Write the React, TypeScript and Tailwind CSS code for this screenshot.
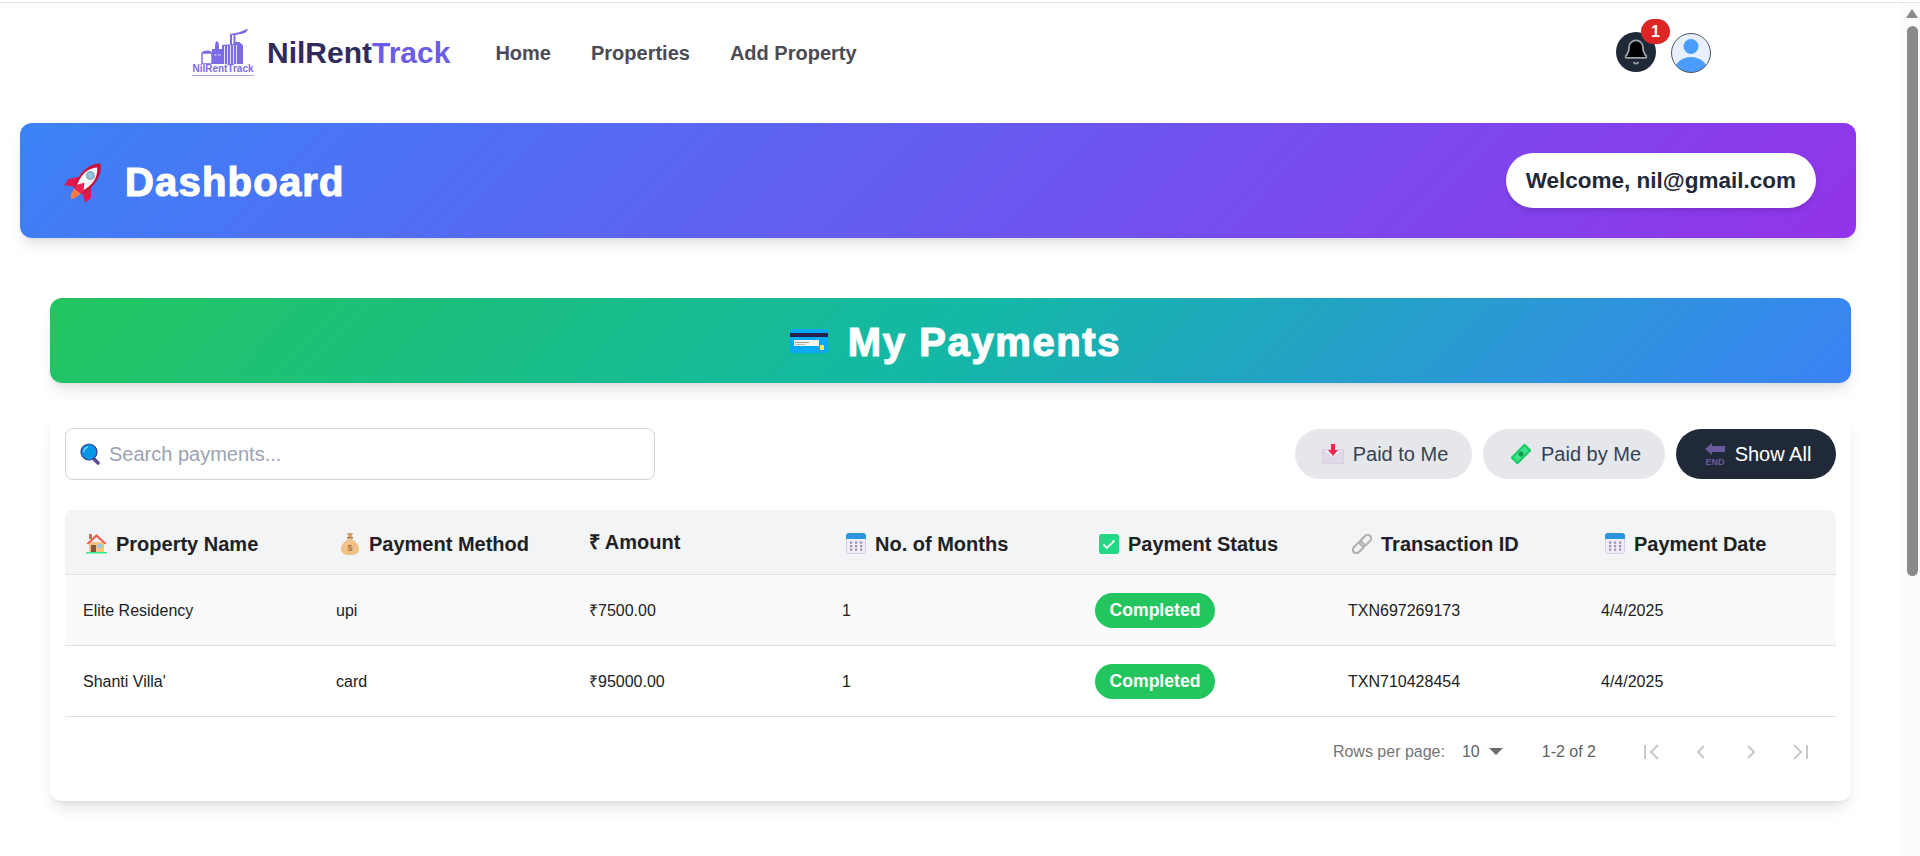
import { Bell } from "lucide-react";
import type { ReactNode } from "react";

function LogoMark() {
  return (
    <svg viewBox="0 0 66 36" className="w-[66px] h-[36px]">
      <g fill="#7b6be6">
        <path d="M40 6c4-1 7-1 10-2 3-1 5-3 8-3-1 3-4 5-8 5-3 1-6 1-10 1z" />
        <rect x="40" y="7" width="2" height="10" />
        <rect x="43.500" y="7" width="2" height="10" />
        <path d="M32 17l12-1 0-2 5 0 4 3v19H32z" />
        <path d="M25 19a2 6 0 0 1 4 0v3h-4z" />
        <rect x="22" y="21" width="10" height="15" />
        <path d="M12 25h10v11H12z" fill="none" stroke="#7b6be6" strokeWidth="1.400" />
        <path d="M12 25a5 2.500 0 0 1 10 0z" />
      </g>
      <g stroke="#ffffff" strokeWidth="0.800">
        <path d="M34.500 18v18M37.500 18v18M40.500 17v19M43.500 17v19M46.500 17v19" />
        <path d="M24 27h2.500M28 27h2.500M13 28h8" />
      </g>
    </svg>
  );
}

function Rocket() {
  return (
    <svg viewBox="0 0 40 40" className="w-[42px] h-[42px]">
      <g transform="rotate(40 20 20)">
        <path d="M16 31h8l-1 5c-1 3-2 4-3 5-1-1-2-2-3-5z" fill="#fb7a45" />
        <path d="M13 19l-7 9 1 7 8-5zM27 19l7 9-1 7-8-5z" fill="#e0184f" />
        <path d="M20 -3c6 5 8 12 8 19 0 6-2 11-3 15H15c-1-4-3-9-3-15 0-7 2-14 8-19z" fill="#c9113f" />
        <path d="M20 2c4 4 6 9 6 14 0 5-1 8-2 11h-8c-1-3-2-6-2-11 0-5 2-10 6-14z" fill="#f7f5f5" />
        <path d="M15 28l5-7 5 7-1 3h-8z" fill="#ee2455" />
        <circle cx="20" cy="12" r="3.600" fill="#8fc3e0" stroke="#6c97ad" strokeWidth="1" />
      </g>
    </svg>
  );
}

function CardIcon() {
  return (
    <svg viewBox="0 0 38 24" className="w-[38px] h-[24px]">
      <rect width="38" height="24" rx="3" fill="#03a9f4" />
      <rect y="4" width="38" height="4" fill="#27214f" />
      <rect x="4" y="11" width="25" height="6" fill="#f4f4f4" />
      <rect x="5" y="13" width="14" height="1" fill="#9a9a9a" />
      <rect x="5" y="15" width="10" height="1" fill="#bdbdbd" />
      <rect x="30" y="16" width="4" height="5" rx="1" fill="#ffee58" />
    </svg>
  );
}

function SearchIcon() {
  return (
    <svg viewBox="0 0 20 22" className="w-[20px] h-[22px] shrink-0">
      <path d="M13 15l5 5" stroke="#5c4a8a" strokeWidth="3.500" strokeLinecap="round" />
      <circle cx="9" cy="9" r="8" fill="#0797e6" stroke="#3b3e8f" strokeWidth="1.200" />
      <path d="M4 9a5 5 0 0 1 4-5" stroke="#7fd0f7" strokeWidth="1.400" fill="none" />
    </svg>
  );
}

function InboxIcon() {
  return (
    <svg viewBox="0 0 22 20" className="w-[22px] h-[20px]">
      <path d="M0 6h22v14H0z" fill="#e2d9e8" stroke="#cbbfd4" strokeWidth="0.600" />
      <path d="M0 6l11 8 11-8z" fill="#f4eef6" stroke="#cbbfd4" strokeWidth="0.600" />
      <path d="M9 0h4v6h3l-5 6-5-6h3z" fill="#f5234f" />
    </svg>
  );
}

function MoneyIcon() {
  return (
    <svg viewBox="0 0 20 20" className="w-[20px] h-[20px]">
      <g transform="rotate(-45 10 10)">
        <rect x="0" y="5" width="20" height="10" fill="#17c964" />
        <rect x="2" y="7" width="16" height="6" fill="#3be28a" />
        <circle cx="10" cy="10" r="2.600" fill="#0f9d4f" />
      </g>
    </svg>
  );
}

function EndIcon() {
  return (
    <svg viewBox="0 0 20 22" className="w-[20px] h-[22px]">
      <path d="M0 6l7-6v3h13v6H7v3z" fill="#6a5a9e" />
      <text x="10" y="21.500" textAnchor="middle" fontSize="9" fontWeight="700" fill="#6a5a9e">END</text>
    </svg>
  );
}

function HouseIcon() {
  return (
    <svg viewBox="0 0 21 21" className="w-[21px] h-[21px]">
      <rect x="3" y="1" width="3" height="5" fill="#b5785a" />
      <path d="M3 9h15v10H3z" fill="#f2c27e" />
      <path d="M10.500 1L0.500 10.500l1.500 1L10.500 4l8.500 7.500 1.500-1z" fill="#f4564a" />
      <rect x="5" y="12" width="5" height="7" fill="#8a5540" />
      <rect x="12" y="11" width="4" height="4" fill="#8fc9f0" />
      <rect y="19" width="21" height="1.500" fill="#2cf08e" />
    </svg>
  );
}

function BagIcon() {
  return (
    <svg viewBox="0 0 20 22" className="w-[20px] h-[22px]">
      <path d="M7 0h6l-1.500 4h-3z" fill="#d9a066" />
      <rect x="7" y="4" width="6" height="1.500" fill="#a8703c" />
      <path d="M8 6h4c4 3 7 6 7 10 0 4-3 6-9 6s-9-2-9-6c0-4 3-7 7-10z" fill="#f1c187" />
      <text x="10" y="18" textAnchor="middle" fontSize="9" fill="#a8703c">$</text>
    </svg>
  );
}

function CalendarIcon() {
  return (
    <svg viewBox="0 0 20 21" className="w-[20px] h-[21px]">
      <rect x="0.500" y="0.500" width="19" height="20" rx="2.500" fill="#f1edf6" stroke="#d8cfe2" />
      <path d="M0 6V3a3 3 0 0 1 3-3h14a3 3 0 0 1 3 3v3z" fill="#2a94dd" />
      <g fill="#9a8fb5">
        <rect x="4" y="8.500" width="2.200" height="2.200" />
        <rect x="9" y="8.500" width="2.200" height="2.200" />
        <rect x="14" y="8.500" width="2.200" height="2.200" />
        <rect x="4" y="12" width="2.200" height="2.200" />
        <rect x="9" y="12" width="2.200" height="2.200" />
        <rect x="14" y="12" width="2.200" height="2.200" />
        <rect x="4" y="15.500" width="2.200" height="2.200" />
        <rect x="9" y="15.500" width="2.200" height="2.200" />
        <rect x="14" y="15.500" width="2.200" height="2.200" />
      </g>
    </svg>
  );
}

function CheckIcon() {
  return (
    <svg viewBox="0 0 20 20" className="w-[20px] h-[20px]">
      <rect width="20" height="20" rx="2.500" fill="#22d884" />
      <path d="M4.500 10.500l3.500 3.500 7.500-7.500" stroke="#f4fff9" strokeWidth="1.800" fill="none" />
    </svg>
  );
}

function LinkIcon() {
  return (
    <svg viewBox="0 0 20 20" className="w-[20px] h-[20px]">
      <g transform="rotate(-45 10 10)" fill="none" stroke="#b3b3b3" strokeWidth="2.200">
        <rect x="-1.500" y="6.500" width="13" height="7" rx="3.500" />
        <rect x="8.500" y="6.500" width="13" height="7" rx="3.500" />
      </g>
    </svg>
  );
}

function FilterButton({ icon, label, width, dark }: { icon: ReactNode; label: string; width: string; dark?: boolean }) {
  return (
    <button
      className={`h-[50px] ${width} rounded-full flex flex-row items-center justify-center gap-[6px] text-[20px] ${
        dark ? "bg-[#1f2937] text-white" : "bg-[#e5e7eb] text-[#374151]"
      }`}
    >
      <span className="w-[28px] grid place-items-center">{icon}</span>
      {label}
    </button>
  );
}

function HeaderCell({ icon, label }: { icon: ReactNode; label: string }) {
  return (
    <th className="pl-[18px] pt-[4px] text-left font-bold">
      <div className="flex flex-row items-center gap-[6px]">
        <span className="w-[27px] grid place-items-center">{icon}</span>
        {label}
      </div>
    </th>
  );
}

const payments = [
  { name: "Elite Residency", method: "upi", amount: "₹7500.00", months: "1", txn: "TXN697269173", date: "4/4/2025" },
  { name: "Shanti Villa'", method: "card", amount: "₹95000.00", months: "1", txn: "TXN710428454", date: "4/4/2025" },
];

export default function App() {
  return (
    <div className="h-[856px] overflow-hidden bg-white font-['Liberation_Sans',Arial,sans-serif] flex flex-col">
      <div className="mt-[2px] h-px bg-[#e3e3e3] shrink-0" />
      <div className="flex-1 flex flex-row min-h-0">
        <main className="w-[1901px]">
          <header className="h-[98px] pl-[190px] pr-[190px] flex flex-row items-center">
            <div className="w-[66px] flex flex-col items-center">
              <LogoMark />
              <span className="text-[10px] leading-[10px] font-bold text-[#7b6be6] border-b border-[#a99ff0] pb-[1px] whitespace-nowrap">
                NilRentTrack
              </span>
            </div>
            <div className="ml-[11px] text-[30px] font-bold text-[#2f2b5a]">
              NilRent<span className="text-[#6c5ce7]">Track</span>
            </div>
            <nav className="ml-[45px] pt-[2px] flex flex-row gap-[40px] text-[20px] font-bold text-[#4b4b55]">
              <a>Home</a>
              <a>Properties</a>
              <a>Add Property</a>
            </nav>
            <div className="ml-auto flex flex-row items-center gap-[15px]">
              <div className="relative w-10 h-10 rounded-full bg-[#1f2937] grid place-items-center">
                <Bell className="w-[28px] h-[28px] text-[#9ca3af]" fill="#000000" strokeWidth={1.500} />
                <span className="absolute -top-[13px] left-[25px] w-[29px] h-[25px] rounded-full bg-[#dc2626] text-white text-[16px] font-bold grid place-items-center">
                  1
                </span>
              </div>
              <svg viewBox="0 0 40 40" className="w-10 h-10 mt-[2px]">
                <clipPath id="avatar-clip">
                  <circle cx="20" cy="20" r="19.500" />
                </clipPath>
                <circle cx="20" cy="20" r="19.500" fill="#e8f0fe" />
                <g clipPath="url(#avatar-clip)" fill="#4a9dff">
                  <circle cx="20" cy="13.500" r="7.500" />
                  <ellipse cx="20" cy="37" rx="16" ry="13" />
                </g>
                <circle cx="20" cy="20" r="19.500" fill="none" stroke="#4b5563" />
              </svg>
            </div>
          </header>

          <section className="mt-[22px] ml-5 w-[1836px] h-[115px] rounded-xl bg-[linear-gradient(135deg,#3b82f6,#9333ea)] shadow-lg pl-[44px] pr-10 flex flex-row items-center justify-between">
            <h1 className="pt-[2px] flex flex-row items-center gap-[19px] text-[40px] font-bold text-white tracking-[1.2px] [-webkit-text-stroke:1.2px_white]">
              <Rocket />
              Dashboard
            </h1>
            <div className="h-[55px] px-5 rounded-full bg-white shadow-md flex items-center text-[22.500px] font-bold text-[#1f2937]">
              Welcome, nil@gmail.com
            </div>
          </section>

          <div className="mt-[60px] mx-[50px]">
            <section className="h-[85px] pl-[10px] rounded-xl bg-[linear-gradient(135deg,#22c55e,#14b8a6,#3b82f6)] shadow-lg flex flex-row items-center justify-center gap-[20px]">
              <CardIcon />
              <h2 className="pt-[2px] text-[40px] font-bold text-white tracking-[1.600px] [-webkit-text-stroke:1.2px_white]">
                My Payments
              </h2>
            </section>

            <section className="mt-[30px] px-[15px] pt-[15px] pb-[14px] rounded-xl bg-white shadow-lg">
              <div className="flex flex-row items-center justify-between">
                <label className="w-[590px] h-[52px] border border-[#d1d5db] rounded-lg pl-[14px] flex flex-row items-center gap-[9px]">
                  <SearchIcon />
                  <input
                    className="flex-1 outline-none text-[20px] placeholder:text-[#9ca3af]"
                    placeholder="Search payments..."
                  />
                </label>
                <div className="flex flex-row gap-[11px]">
                  <FilterButton icon={<InboxIcon />} label="Paid to Me" width="w-[177px]" />
                  <FilterButton icon={<MoneyIcon />} label="Paid by Me" width="w-[182px]" />
                  <FilterButton icon={<EndIcon />} label="Show All" width="w-[160px]" dark />
                </div>
              </div>

              <div className="mt-[30px] rounded-t-lg overflow-hidden">
                <table className="w-full table-fixed border-collapse text-[#212121]">
                  <thead>
                    <tr className="h-[64px] bg-[#f3f4f6] text-[20px] border-b border-[#e0e0e0]">
                      <HeaderCell icon={<HouseIcon />} label="Property Name" />
                      <HeaderCell icon={<BagIcon />} label="Payment Method" />
                      <th className="pl-[18px] text-left font-bold">₹ Amount</th>
                      <HeaderCell icon={<CalendarIcon />} label="No. of Months" />
                      <HeaderCell icon={<CheckIcon />} label="Payment Status" />
                      <HeaderCell icon={<LinkIcon />} label="Transaction ID" />
                      <HeaderCell icon={<CalendarIcon />} label="Payment Date" />
                    </tr>
                  </thead>
                  <tbody className="text-[16px]">
                    {payments.map((p, i) => (
                      <tr key={p.txn} className={`h-[71px] border-b border-[#e0e0e0] ${i === 0 ? "bg-[#fafafa]" : "bg-white"}`}>
                        <td className="pl-[18px] pt-[2px]">{p.name}</td>
                        <td className="pl-[18px] pt-[2px]">{p.method}</td>
                        <td className="pl-[18px] pt-[2px]">{p.amount}</td>
                        <td className="pl-[18px] pt-[2px]">{p.months}</td>
                        <td className="pl-[18px] pt-[2px]">
                          <span className="inline-flex h-[35px] w-[120px] items-center justify-center rounded-full bg-[#22c55e] text-white text-[17.600px] font-bold">
                            Completed
                          </span>
                        </td>
                        <td className="pl-[18px] pt-[2px]">{p.txn}</td>
                        <td className="pl-[18px] pt-[2px]">{p.date}</td>
                      </tr>
                    ))}
                  </tbody>
                </table>
              </div>

              <div className="h-[70px] pr-[10px] flex flex-row items-center justify-end text-[16px] text-[#757575]">
                <span>Rows per page:</span>
                <span className="ml-[17px] text-[#616161]">10</span>
                <svg viewBox="0 0 14 7" className="ml-[9px] w-[14px] h-[7px]">
                  <path d="M0 0h14L7 7z" fill="#6b6b6b" />
                </svg>
                <span className="ml-[39px] text-[#616161]">1-2 of 2</span>
                <div className="ml-[30px] flex flex-row text-[#c8c8c8]">
                  {[
                    "M19 19l-7-7 7-7M6 5v14",
                    "M15 18l-6-6 6-6",
                    "M9 18l6-6-6-6",
                    "M5 19l7-7-7-7M18 5v14",
                  ].map((d) => (
                    <span key={d} className="w-[50px] grid place-items-center">
                      <svg viewBox="0 0 24 24" className="w-6 h-6" fill="none" stroke="currentColor" strokeWidth="2">
                        <path d={d} />
                      </svg>
                    </span>
                  ))}
                </div>
              </div>
            </section>
          </div>
        </main>

        <aside className="w-[19px] bg-[#fbfbfb] flex flex-col items-center pl-[3px]">
          <svg viewBox="0 0 12 9" className="mt-[6px] w-3 h-[9px]">
            <path d="M6 0l6 9H0z" fill="#8a8a8a" />
          </svg>
          <div className="mt-[8px] w-[11px] h-[550px] rounded-full bg-[#8a8a8a]" />
        </aside>
      </div>
    </div>
  );
}
